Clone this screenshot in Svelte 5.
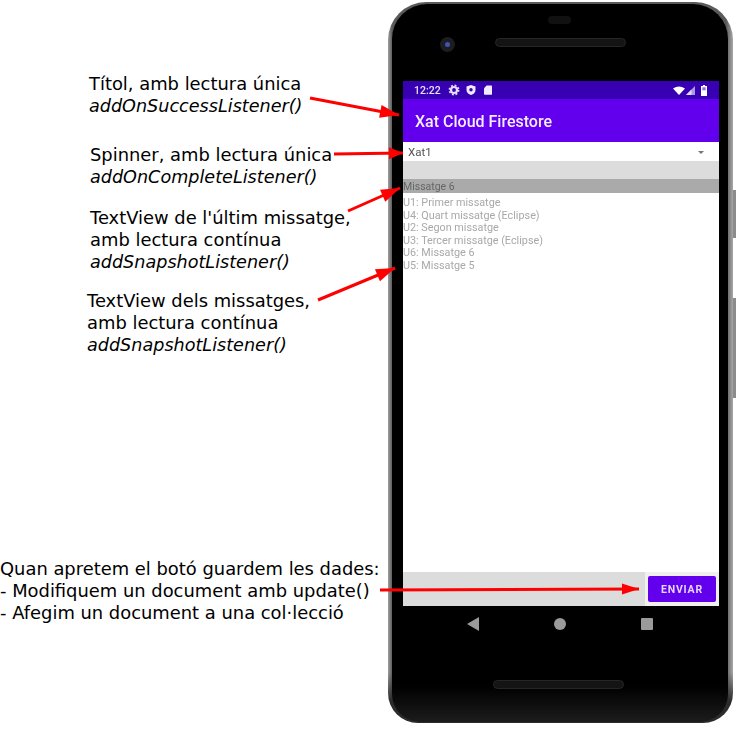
<script>
  const notes = [
    { cls: 'n1', lines: ['Títol, amb lectura única'], call: 'addOnSuccessListener()' },
    { cls: 'n2', lines: ['Spinner, amb lectura única'], call: 'addOnCompleteListener()' },
    { cls: 'n3', lines: ["TextView de l'últim missatge,", 'amb lectura contínua'], call: 'addSnapshotListener()' },
    { cls: 'n4', lines: ['TextView dels missatges,', 'amb lectura contínua'], call: 'addSnapshotListener()' },
    {
      cls: 'n5',
      lines: ['Quan apretem el botó guardem les dades:', '- Modifiquem un document amb update()', '- Afegim un document a una col·lecció']
    }
  ];

  const messages = [
    'U1: Primer missatge',
    'U4: Quart missatge (Eclipse)',
    'U2: Segon missatge',
    'U3: Tercer missatge (Eclipse)',
    'U6: Missatge 6',
    'U5: Missatge 5'
  ];

  const arrows = [
    [310, 98, 399, 115, 19, 6.5],
    [334, 154, 403, 153, 14, 6],
    [348, 211, 400, 188, 19, 6.5],
    [318, 300, 395, 268, 19, 6.5],
    [380, 590, 639, 589, 17, 5.5]
  ];

  function head([x1, y1, x2, y2, len, half]) {
    const d = Math.hypot(x2 - x1, y2 - y1);
    const ux = (x2 - x1) / d;
    const uy = (y2 - y1) / d;
    const bx = x2 - ux * len;
    const by = y2 - uy * len;
    return `${x2},${y2} ${bx - uy * half},${by + ux * half} ${bx + uy * half},${by - ux * half}`;
  }
</script>

<div class="page">
  <div class="phone">
    <span class="key key-a"></span>
    <span class="key key-b"></span>
    <div class="body">
      <div class="top">
        <span class="sensor"></span>
        <span class="camera"><span class="lens"></span></span>
        <span class="speaker"></span>
      </div>

      <div class="screen">
        <div class="status">
          <span class="time">12:22</span>
          <svg class="ico" viewBox="0 0 12 12" width="12" height="12">
            <circle cx="6" cy="6" r="3" fill="none" stroke="#e8e0f8" stroke-width="2.2" />
            <circle cx="6" cy="6" r="4.7" fill="none" stroke="#e8e0f8" stroke-width="1.5" stroke-dasharray="1.9 1.8" />
          </svg>
          <svg class="ico" viewBox="0 0 12 12" width="12" height="12">
            <path d="M6 1 L10.5 2.6 V6 C10.5 8.6 8.5 10.4 6 11 C3.5 10.4 1.5 8.6 1.5 6 V2.6 Z" fill="#f0eafc" />
            <circle cx="6" cy="5.8" r="1.7" fill="#3700b3" />
          </svg>
          <svg class="ico" viewBox="0 0 12 12" width="12" height="12">
            <path d="M4.6 1.5 H9.4 Q10 1.5 10 2.2 V10 Q10 10.7 9.4 10.7 H2.8 Q2 10.7 2 10 V4.2 Z" fill="#f0eafc" />
          </svg>
          <span class="spacer"></span>
          <svg class="wifi" viewBox="0 0 12 9" width="12" height="9">
            <path d="M0 2.4 Q6 -1.6 12 2.4 L6 9 Z" fill="#fff" />
          </svg>
          <svg class="signal" viewBox="0 0 9 9" width="9" height="9">
            <path d="M9 0 V9 H0 Z" fill="#a99be0" />
            <path d="M5.5 3.5 V9 H0 Z" fill="#e0daf5" />
          </svg>
          <svg class="battery" viewBox="0 0 6 11" width="6" height="11">
            <path d="M2 0 H4 V1 H6 V11 H0 V1 H2 Z" fill="#fff" />
            <rect x="1.3" y="2.3" width="3.4" height="3" fill="#8d75dc" />
          </svg>
        </div>

        <div class="toolbar">Xat Cloud Firestore</div>

        <div class="spinner">
          <span>Xat1</span>
          <span class="caret"></span>
        </div>

        <div class="gap"></div>
        <div class="last">Missatge 6</div>

        <div class="list">
          {#each messages as msg}
            <div class="msg">{msg}</div>
          {/each}
        </div>

        <div class="send">
          <div class="input"></div>
          <div class="btn-wrap"><button class="btn">ENVIAR</button></div>
        </div>
      </div>

      <div class="nav">
        <svg viewBox="0 0 12 14" width="12" height="14"><path d="M0 7 L12 0 V14 Z" fill="#9a9a9a" /></svg>
        <span class="dot"></span>
        <span class="square"></span>
      </div>

      <div class="bottom"><span class="speaker low"></span></div>
    </div>
  </div>

  {#each notes as note}
    <div class="note {note.cls}">
      {#each note.lines as line}
        <div>{line}</div>
      {/each}
      {#if note.call}<div class="call">{note.call}</div>{/if}
    </div>
  {/each}

  <svg class="arrows" viewBox="0 0 740 740" width="740" height="740">
    {#each arrows as a}
      <line x1={a[0]} y1={a[1]} x2={a[2]} y2={a[3]} stroke="#f00" stroke-width="3" />
      <polygon points={head(a)} fill="#f00" />
    {/each}
  </svg>
</div>

<style>
  :global(body) {
    background: #fff;
  }

  .page {
    position: relative;
    width: 740px;
    height: 740px;
    overflow: hidden;
    background: #fff;
    font-family: "DejaVu Sans", sans-serif;
  }

  .phone {
    position: absolute;
    left: 388px;
    top: 2px;
    width: 345px;
    height: 721px;
    box-sizing: border-box;
    padding: 2px 5px 1px 4px;
    display: flex;
    border-radius: 38px 38px 30px 30px;
    background:
      linear-gradient(transparent 93%, #2c2c2c 97%),
      linear-gradient(90deg, #a0a0a0, #5a5a5a 1.2%, #5a5a5a 98%, #a8a8a8);
  }

  .key {
    position: absolute;
    left: 345px;
    width: 3px;
    background: #8c8c8c;
  }

  .key-a {
    top: 188px;
    height: 48px;
  }

  .key-b {
    top: 296px;
    height: 100px;
  }

  .body {
    flex: 1;
    display: flex;
    flex-direction: column;
    border-radius: 35px 35px 28px 28px;
    background: linear-gradient(#000 95%, #1c1c1c);
  }

  .top {
    position: relative;
    height: 77px;
    flex: none;
  }

  .sensor {
    position: absolute;
    left: 156px;
    top: 12px;
    width: 23px;
    height: 8px;
    border-radius: 4px;
    background: #111;
  }

  .camera {
    position: absolute;
    left: 48px;
    top: 33px;
    width: 15px;
    height: 15px;
    border-radius: 50%;
    background: #1c1c22;
    display: flex;
    align-items: center;
    justify-content: center;
  }

  .lens {
    width: 5px;
    height: 5px;
    border-radius: 50%;
    background: #3f55b0;
  }

  .speaker {
    position: absolute;
    left: 103px;
    top: 34px;
    width: 131px;
    height: 9px;
    box-sizing: border-box;
    border: 1px solid #262626;
    border-radius: 5px;
    background: #141414;
  }

  .speaker.low {
    left: 101px;
    top: 38px;
  }

  .screen {
    margin: 0 9px 0 11px;
    height: 525px;
    flex: none;
    display: flex;
    flex-direction: column;
    background: #fff;
    font-family: Roboto, sans-serif;
    filter: blur(0.4px);
  }

  .status {
    height: 18px;
    flex: none;
    display: flex;
    align-items: center;
    padding: 0 12px 0 11px;
    background: #3700b3;
    color: #e8e0f8;
    font-size: 10.5px;
    font-weight: 500;
  }

  .time {
    width: 34px;
  }

  .ico {
    margin-right: 5px;
  }

  .spacer {
    flex: 1;
  }

  .wifi {
    margin-right: 1px;
  }

  .signal {
    margin-right: 6px;
  }

  .toolbar {
    height: 43px;
    flex: none;
    display: flex;
    align-items: center;
    padding: 2px 0 0 12px;
    box-sizing: border-box;
    background: #6200ee;
    color: #f4edff;
    font-size: 16px;
    font-weight: 500;
  }

  .spinner {
    height: 19px;
    flex: none;
    display: flex;
    align-items: center;
    justify-content: space-between;
    padding: 1px 15px 0 5px;
    box-sizing: border-box;
    color: #555;
    font-size: 11.5px;
  }

  .caret {
    width: 0;
    height: 0;
    border-left: 3.5px solid transparent;
    border-right: 3.5px solid transparent;
    border-top: 3.5px solid #777;
  }

  .gap {
    height: 18px;
    flex: none;
    background: #dcdcdc;
  }

  .last {
    height: 14px;
    flex: none;
    line-height: 16px;
    background: #aaa;
    color: #666;
    font-size: 10.5px;
  }

  .list {
    flex: 1;
    padding-top: 4px;
    color: #a8a8a8;
    font-size: 10.8px;
    line-height: 12.6px;
  }

  .send {
    height: 34px;
    flex: none;
    display: flex;
    background: #f0f0f0;
  }

  .input {
    flex: 1;
    background: #dcdcdc;
  }

  .btn-wrap {
    width: 74px;
    display: flex;
    align-items: center;
    justify-content: flex-end;
    padding-right: 3px;
    box-sizing: border-box;
  }

  .btn {
    width: 68px;
    height: 26px;
    padding: 0;
    border: none;
    border-radius: 2px;
    background: #6200ee;
    color: #e4d6fb;
    font-family: Roboto, sans-serif;
    font-size: 10.5px;
    font-weight: 700;
    letter-spacing: 0.8px;
  }

  .nav {
    height: 36px;
    flex: none;
    display: flex;
    align-items: center;
    justify-content: space-between;
    padding: 0 75px;
    box-sizing: border-box;
  }

  .dot {
    width: 12px;
    height: 12px;
    border-radius: 50%;
    background: #9a9a9a;
  }

  .square {
    width: 12px;
    height: 12px;
    border-radius: 1px;
    background: #9a9a9a;
  }

  .bottom {
    position: relative;
    flex: 1;
  }

  .note {
    position: absolute;
    font-size: 17.9px;
    line-height: 22px;
    color: #000;
    white-space: nowrap;
  }

  .call {
    font-style: italic;
    font-size: 17.6px;
  }

  .n1 {
    left: 89px;
    top: 73px;
  }

  .n2 {
    left: 90px;
    top: 144px;
  }

  .n3 {
    left: 90px;
    top: 207px;
  }

  .n4 {
    left: 87px;
    top: 290px;
  }

  .n5 {
    left: 0;
    top: 558px;
  }

  .arrows {
    position: absolute;
    left: 0;
    top: 0;
  }
</style>
